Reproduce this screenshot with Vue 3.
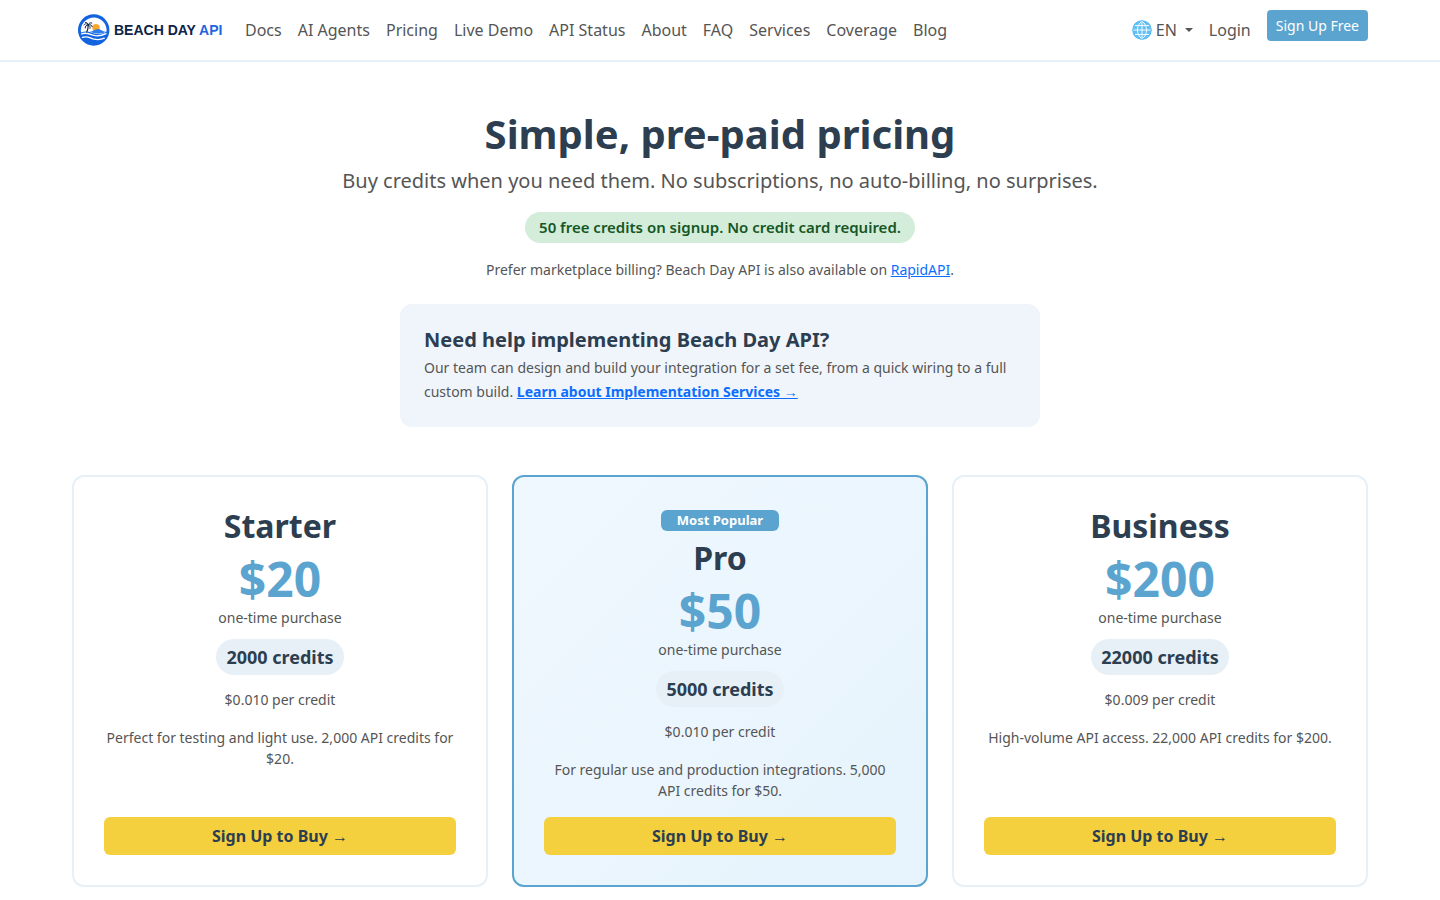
<script setup>
const links = ['Docs', 'AI Agents', 'Pricing', 'Live Demo', 'API Status', 'About', 'FAQ', 'Services', 'Coverage', 'Blog']

const plans = [
  { name: 'Starter', price: '$20', credits: '2000 credits', rate: '$0.010 per credit', text: 'Perfect for testing and light use. 2,000 API credits for $20.' },
  { name: 'Pro', price: '$50', credits: '5000 credits', rate: '$0.010 per credit', text: 'For regular use and production integrations. 5,000 API credits for $50.', popular: true },
  { name: 'Business', price: '$200', credits: '22000 credits', rate: '$0.009 per credit', text: 'High-volume API access. 22,000 API credits for $200.' }
]
</script>

<template>
  <div class="page">
    <header class="topbar">
      <nav class="container bar" aria-label="Main">
        <a class="brand" href="#" aria-label="Beach Day API">
          <svg class="mark" viewBox="0 0 36 36" aria-hidden="true">
            <circle cx="17.7" cy="18" r="15.7" fill="#1263e0" />
            <path d="M5 20.5A12.900 12.900 0 1 1 30.600 19.500C26 22.500 21 23 16 20.800C12 19 8.500 19 5 20.500Z" fill="#fff" />
            <circle cx="20" cy="15.700" r="3.700" fill="#f9a72b" />
            <path d="M14 19.800C17 19.500 19 16.800 22.300 17C25 17.200 26 19.500 29.800 19.800C26 22.300 20 22.500 14 19.800Z" fill="#2c7ee6" />
            <path d="M5.500 22C10 19.800 13.500 22.200 17 23.200C21.500 24.400 26 23.600 30 21.600M6.500 25.400C10.500 23.600 13.500 25.600 17 26.800C21 28 25 27.800 28.300 26.200" fill="none" stroke="#fff" stroke-width="1.300" stroke-linecap="round" />
            <path d="M10.600 20.500C11.800 18 12.200 16 12.300 13" fill="none" stroke="#10264b" stroke-width="1.200" />
            <path d="M12.300 13C10.500 11 8.800 11.500 8 13M12.300 13C10 13 9 14.500 9.200 16M12.300 13C12 11 10.800 10.300 9.600 10.400M12.300 13C12.800 11 14.500 10.300 15.800 11M12.300 13C14.500 12.200 16 13 16.200 14.600M12.300 13C14 13.800 14.300 15 14 16.400" fill="none" stroke="#10264b" stroke-width="1" stroke-linecap="round" />
          </svg>
          <span class="brand-text">BEACH DAY <span class="brand-api">API</span></span>
        </a>
        <div class="links">
          <a v-for="link in links" :key="link" href="#">{{ link }}</a>
        </div>
        <div class="account">
          <button class="language" type="button">
            <svg class="globe" viewBox="0 0 18 18" aria-hidden="true">
              <circle cx="9" cy="9" r="8.300" fill="#62c0f5" />
              <path d="M9 1v16M1 9h16M2.500 5h13M2.500 13h13M9 1C3.500 5 3.500 13 9 17M9 1c5.500 4 5.500 12 0 16" fill="none" stroke="#f2fbff" stroke-width="0.900" />
              <circle cx="9" cy="9" r="8.300" fill="none" stroke="#55b9f3" stroke-width="1" />
            </svg>
            <span>EN</span>
            <span class="caret"></span>
          </button>
          <a class="login" href="#">Login</a>
          <a class="signup" href="#">Sign Up Free</a>
        </div>
      </nav>
    </header>

    <main class="container content">
      <section class="intro">
        <h1>Simple, pre-paid pricing</h1>
        <p class="lead">Buy credits when you need them. No subscriptions, no auto-billing, no surprises.</p>
        <span class="free">50 free credits on signup. No credit card required.</span>
        <p class="market">Prefer marketplace billing? Beach Day API is also available on <a href="#">RapidAPI</a>.</p>
      </section>

      <aside class="help">
        <h2>Need help implementing Beach Day API?</h2>
        <p>Our team can design and build your integration for a set fee, from a quick wiring to a full custom build. <a href="#">Learn about Implementation Services →</a></p>
      </aside>

      <section class="plans">
        <article v-for="plan in plans" :key="plan.name" class="plan" :class="{ popular: plan.popular }">
          <span v-if="plan.popular" class="flag">Most Popular</span>
          <h3>{{ plan.name }}</h3>
          <div class="price">{{ plan.price }}</div>
          <div class="once">one-time purchase</div>
          <span class="credits">{{ plan.credits }}</span>
          <div class="rate">{{ plan.rate }}</div>
          <p class="text">{{ plan.text }}</p>
          <a class="buy" href="#">Sign Up to Buy →</a>
        </article>
      </section>
    </main>
  </div>
</template>

<style>
body {
  margin: 0;
  background: #fff;
}
</style>

<style scoped>
.page {
  font-family: "Noto Sans", "Liberation Sans", sans-serif;
  font-size: 16px;
  line-height: 24px;
  color: #555;
}

.page * {
  box-sizing: border-box;
}

h1, h2, h3, p {
  margin: 0;
}

.container {
  max-width: 1320px;
  margin: 0 auto;
  padding: 0 12px;
}

.topbar {
  border-bottom: 2px solid #e8f0f7;
}

.bar {
  display: flex;
  align-items: center;
  height: 60px;
}

.bar a {
  text-decoration: none;
  color: #555;
  white-space: nowrap;
}

.brand {
  display: flex;
  align-items: center;
  gap: 2px;
  padding-left: 4px;
  width: 173px;
}

.mark {
  width: 36px;
  height: 36px;
  flex: none;
}

.bar .brand-text {
  font-family: "Liberation Sans", sans-serif;
  font-size: 14px;
  font-weight: 700;
  color: #0f2347;
}

.brand-api {
  color: #1e66e0;
}

.links {
  display: flex;
  gap: 16px;
}

.account {
  display: flex;
  align-items: center;
  gap: 16px;
  margin-left: auto;
}

.language {
  display: flex;
  align-items: center;
  gap: 4px;
  padding: 0;
  border: 0;
  background: none;
  font: inherit;
  color: #555;
}

.globe {
  width: 20px;
  height: 20px;
}

.caret {
  margin-left: 4px;
  border-top: 4px solid #555;
  border-left: 4px solid transparent;
  border-right: 4px solid transparent;
}

.bar .signup {
  align-self: flex-start;
  margin-bottom: 9px;
  padding: 5px 9px;
  border-radius: 4px;
  background: #5ba4cf;
  color: #fff;
  font-size: 14px;
  line-height: 21px;
}

.content {
  padding-top: 48px;
  padding-bottom: 48px;
}

.intro {
  text-align: center;
}

h1 {
  font-size: 40px;
  line-height: 48px;
  font-weight: 700;
  color: #2c3e50;
}

.lead {
  margin-top: 8px;
  font-size: 20px;
  line-height: 30px;
}

.free {
  display: inline-block;
  margin-top: 16px;
  padding: 4px 14px;
  border-radius: 16px;
  background: #d4edda;
  color: #155724;
  font-size: 15px;
  line-height: 23px;
  font-weight: 600;
}

.market {
  margin-top: 16px;
  font-size: 14px;
  line-height: 21px;
}

.market a, .help a {
  color: #0d6efd;
}

.help {
  max-width: 640px;
  margin: 24px auto 48px;
  padding: 24px 24px 23px;
  border-radius: 12px;
  background: #f0f5fc;
  font-size: 14px;
}

.help h2 {
  margin-bottom: 4px;
  font-size: 20px;
  line-height: 24px;
  font-weight: 700;
  color: #2c3e50;
}

.help a {
  font-weight: 700;
}

.plans {
  display: grid;
  grid-template-columns: repeat(3, 1fr);
  gap: 24px;
}

.plan {
  display: flex;
  flex-direction: column;
  align-items: center;
  padding: 30px;
  border: 2px solid #e8f0f7;
  border-radius: 12px;
  text-align: center;
  font-size: 14px;
  line-height: 21px;
}

.popular {
  border-color: #5ba4cf;
  background: linear-gradient(135deg, #f0f8ff, #e6f3fc);
}

.flag {
  margin: 3px 0 8px;
  padding: 0 16px;
  border-radius: 6px;
  background: #5ba4cf;
  color: #fff;
  font-size: 13px;
  font-weight: 700;
}

h3 {
  font-size: 32px;
  line-height: 38px;
  font-weight: 700;
  color: #2c3e50;
}

.price {
  margin-top: 6px;
  font-size: 48px;
  line-height: 56px;
  font-weight: 700;
  color: #5ba4cf;
}

.credits {
  margin: 11px 0 14px;
  padding: 0 10px;
  border-radius: 18px;
  background: #e8f0f7;
  color: #2c3e50;
  font-size: 18px;
  line-height: 36px;
  font-weight: 700;
}

.text {
  margin: 17px 0 16px;
}

.buy {
  align-self: stretch;
  margin-top: auto;
  padding: 7px;
  border-radius: 6px;
  background: #f4d03f;
  color: #2c3e50;
  font-size: 16px;
  line-height: 24px;
  font-weight: 700;
  text-decoration: none;
}
</style>
